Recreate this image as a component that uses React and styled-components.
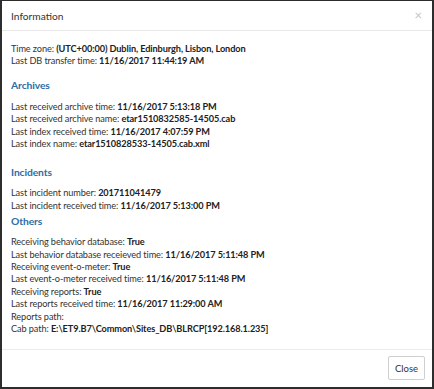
import React from "react";
import styled, { createGlobalStyle } from "styled-components";

const Global = createGlobalStyle`
  html, body { margin: 0; padding: 0; background: #fff; }
  #root { width: 434px; height: 389px; }
`;

const Modal = styled.div`
  box-sizing: border-box;
  width: 434px;
  height: 389px;
  border: 2px solid #2d2d2d;
  border-top-width: 1px;
  background: #fff;
  display: flex;
  flex-direction: column;
  font-family: Lato, "Open Sans", sans-serif;
  color: #333;
`;

const Header = styled.div`
  height: 29px;
  flex: none;
  display: flex;
  align-items: center;
  justify-content: space-between;
  padding: 0 10px 0 9px;
  border-bottom: 1px solid #e8e8e8;
`;

const Title = styled.h4`
  margin: 0;
  font-size: 10.2px;
  font-weight: 400;
  color: #333;
`;

const X = styled.span`
  font-size: 13px;
  color: #c4c4c4;
  line-height: 1;
`;

const Body = styled.div`
  flex: 1;
  padding: 12px 9px 0 9px;
  font-size: 9.2px;
  letter-spacing: -0.1px;
  line-height: 12.4px;
`;

const Section = styled.div`
  margin-top: ${(p) => p.$mt || 0}px;
`;

const Heading = styled.h5`
  margin: 0 0 ${(p) => p.$mb || 8}px 0;
  font-size: 10.3px;
  font-weight: 700;
  color: #2e6da4;
  line-height: 14px;
`;

const Line = styled.div`
  white-space: nowrap;
  b { font-weight: 700; color: #222; }
`;

const Footer = styled.div`
  flex: none;
  height: 36px;
  border-top: 1px solid #ececec;
  display: flex;
  align-items: center;
  justify-content: flex-end;
  padding: 0 7px 1px 0;
`;

const Button = styled.button`
  font-family: Lato, "Open Sans", sans-serif;
  font-size: 9.5px;
  color: #333;
  background: #fff;
  border: 1px solid #cfcfcf;
  border-radius: 2px;
  height: 24px;
  width: 37px;
  padding: 0;
`;

const rows = (arr) =>
  arr.map(([k, v]) => (
    <Line key={k}>
      {k}: {v && <b>{v}</b>}
    </Line>
  ));

export default function App() {
  return (
    <>
      <Global />
      <Modal>
        <Header>
          <Title>Information</Title>
          <X>×</X>
        </Header>
        <Body>
          <Section>
            {rows([
              ["Time zone", "(UTC+00:00) Dublin, Edinburgh, Lisbon, London"],
              ["Last DB transfer time", "11/16/2017 11:44:19 AM"],
            ])}
          </Section>
          <Section $mt={10}>
            <Heading $mb={9}>Archives</Heading>
            {rows([
              ["Last received archive time", "11/16/2017 5:13:18 PM"],
              ["Last received archive name", "etar1510832585-14505.cab"],
              ["Last index received time", "11/16/2017 4:07:59 PM"],
              ["Last index name", "etar1510828533-14505.cab.xml"],
            ])}
          </Section>
          <Section $mt={15}>
            <Heading $mb={8}>Incidents</Heading>
            {rows([
              ["Last incident number", "201711041479"],
              ["Last incident received time", "11/16/2017 5:13:00 PM"],
            ])}
          </Section>
          <Section $mt={2}>
            <Heading $mb={8}>Others</Heading>
            {rows([
              ["Receiving behavior database", "True"],
              ["Last behavior database receieved time", "11/16/2017 5:11:48 PM"],
              ["Receiving event-o-meter", "True"],
              ["Last event-o-meter received time", "11/16/2017 5:11:48 PM"],
              ["Receiving reports", "True"],
              ["Last reports received time", "11/16/2017 11:29:00 AM"],
              ["Reports path", ""],
              ["Cab path", "E:\\ET9.B7\\Common\\Sites_DB\\BLRCP[192.168.1.235]"],
            ])}
          </Section>
        </Body>
        <Footer>
          <Button>Close</Button>
        </Footer>
      </Modal>
    </>
  );
}
